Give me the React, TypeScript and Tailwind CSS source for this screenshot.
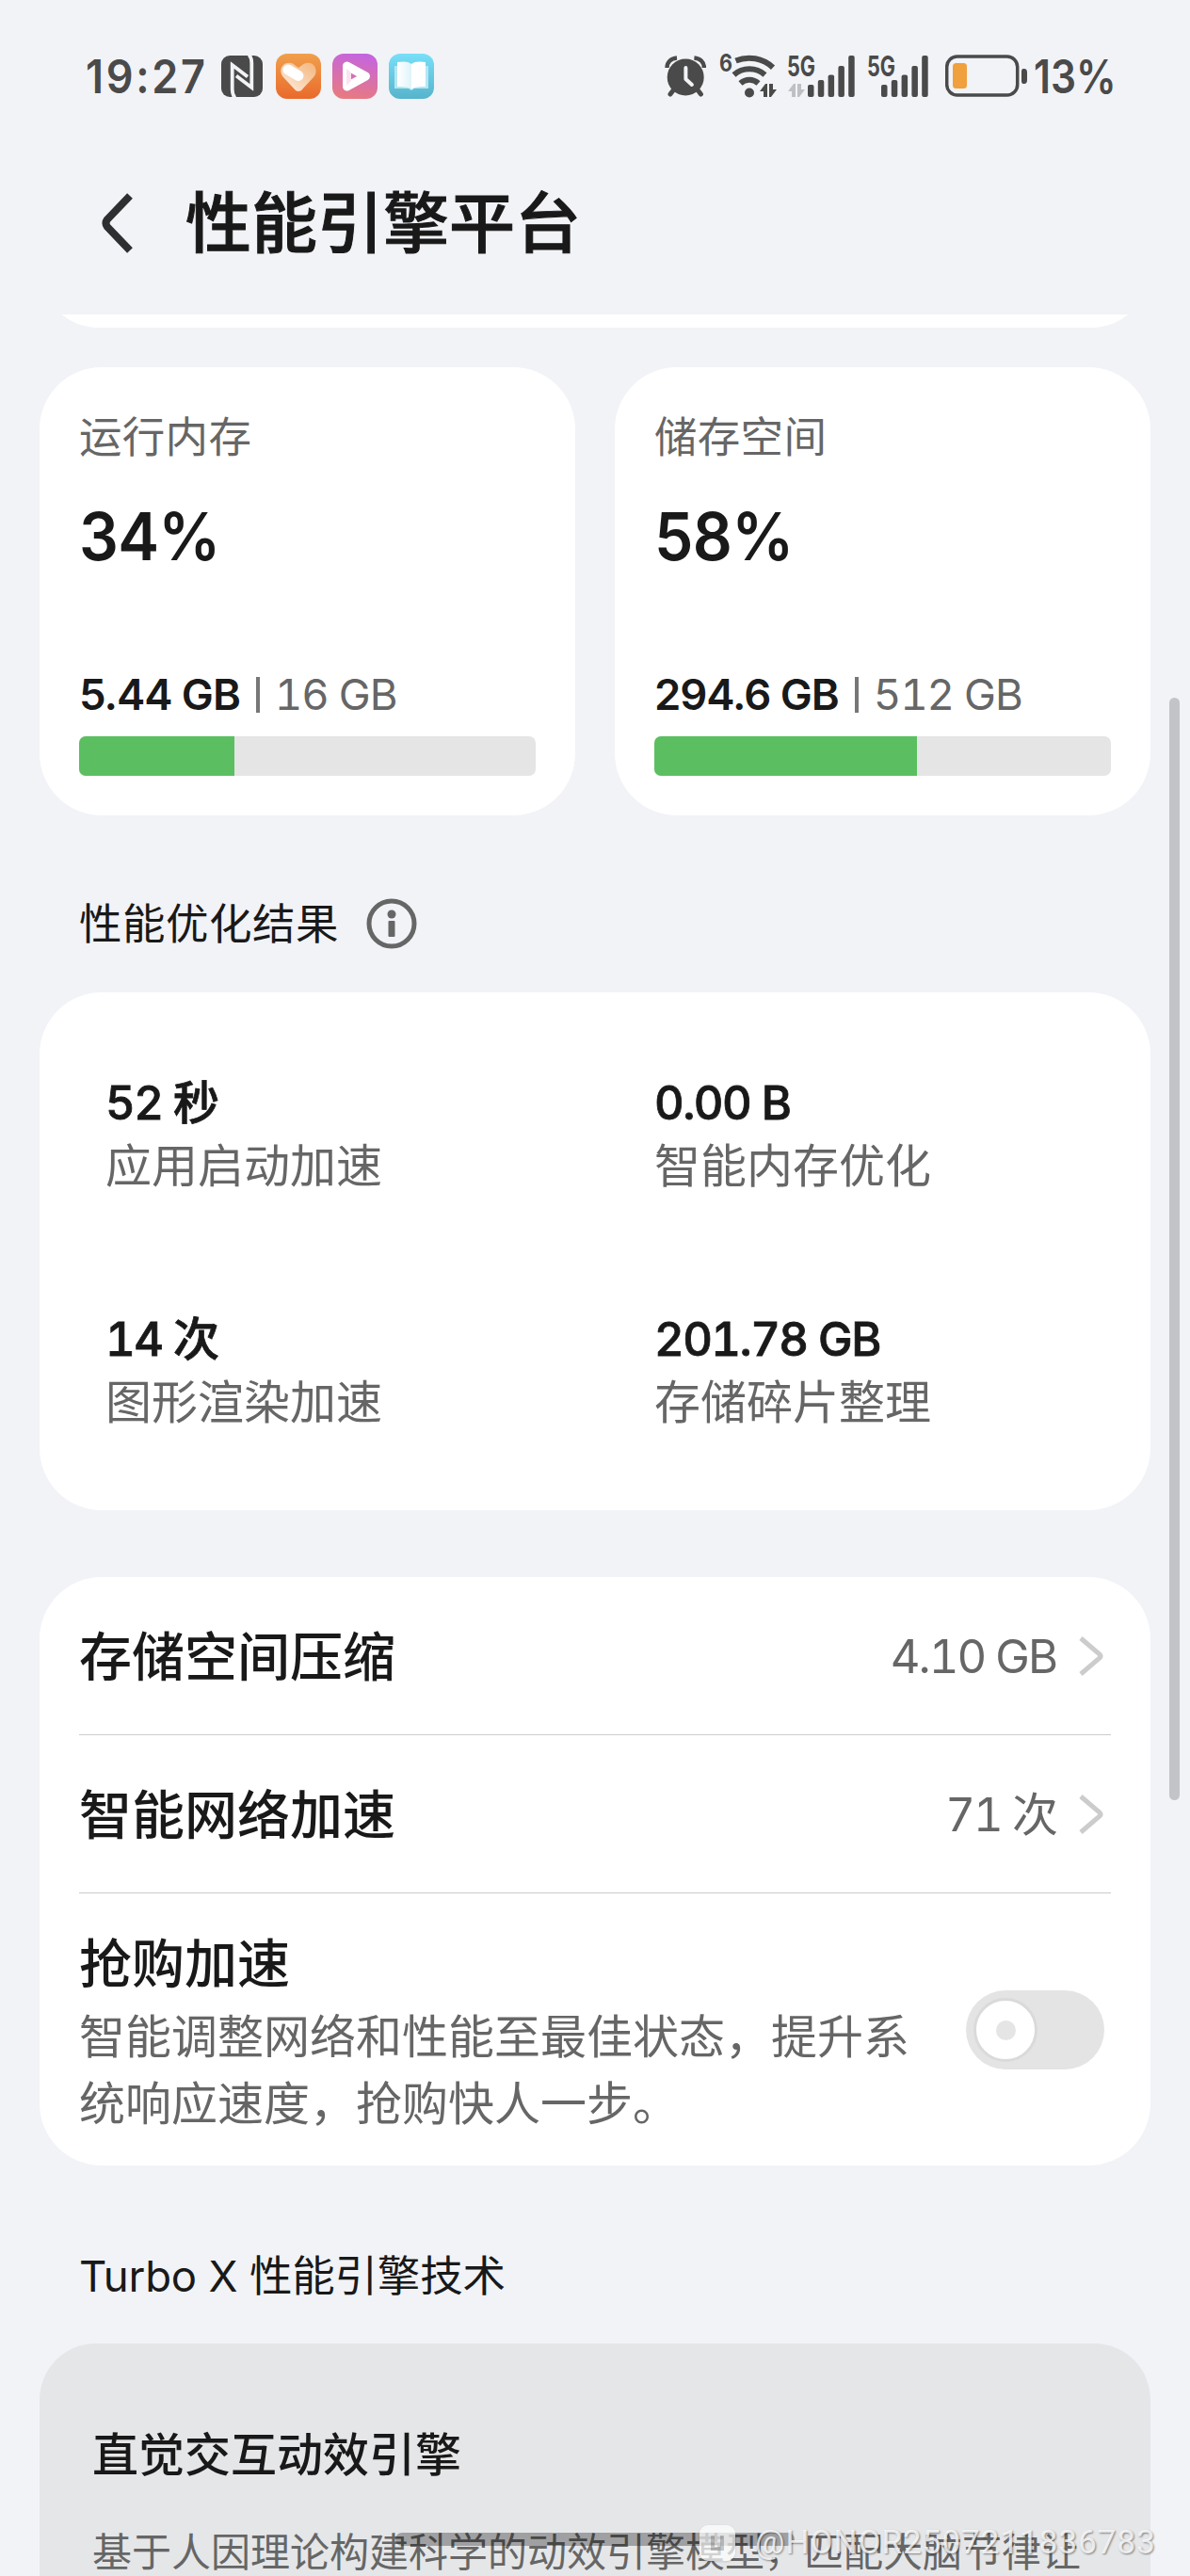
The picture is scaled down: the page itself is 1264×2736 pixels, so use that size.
const usageCards = [
  { label: '运行内存', percent: '34%', used: '5.44 GB', total: '16 GB', fill: 34 },
  { label: '储存空间', percent: '58%', used: '294.6 GB', total: '512 GB', fill: 57.5 },
]

const results = [
  { value: '52 秒', label: '应用启动加速' },
  { value: '0.00 B', label: '智能内存优化' },
  { value: '14 次', label: '图形渲染加速' },
  { value: '201.78 GB', label: '存储碎片整理' },
]

const links = [
  { title: '存储空间压缩', value: '4.10 GB' },
  { title: '智能网络加速', value: '71 次' },
]

const signalBars = [
  { x: 0, h: 13 },
  { x: 10.8, h: 18 },
  { x: 21.6, h: 23.5 },
  { x: 32.4, h: 33 },
  { x: 43.2, h: 44 },
]

function NfcIcon() {
  return (
    <svg width="44" height="44" viewBox="0 0 44 44" fill="none">
      <rect width="44" height="44" rx="9" fill="#4a4a4a" />
      <path d="M14.500 45C12 42 11.700 40 11.700 36V10L28 22.500" stroke="#f1f3f7" strokeWidth="3.800" />
      <path d="M29.500 -1C32 2 32.300 4 32.300 8V34L16 21.500" stroke="#f1f3f7" strokeWidth="3.800" />
    </svg>
  )
}

function HealthIcon() {
  return (
    <svg width="48" height="48" viewBox="0 0 48 48">
      <defs>
        <linearGradient id="health-bg" x1="0" y1="0" x2="0" y2="1">
          <stop stopColor="#f0a04c" />
          <stop offset="1" stopColor="#ea6a2c" />
        </linearGradient>
        <linearGradient id="health-heart" x1="1" y1="0" x2="0" y2="1">
          <stop stopColor="#f4b57c" />
          <stop offset="1" stopColor="#fdeee2" />
        </linearGradient>
      </defs>
      <rect width="48" height="48" rx="12" fill="url(#health-bg)" />
      <path d="M24 40c-2 0-3-1-4-2L8 25C4 20 5 15 8 12s9-3 12 0l4 3 4-3c4-3 9-3 12 0s4 9 0 13L28 38c-1 1-2 2-4 2z" fill="url(#health-heart)" />
      <path d="M13 17l11 6.500" stroke="#fff" strokeWidth="11" strokeLinecap="round" />
    </svg>
  )
}

function VideoIcon() {
  return (
    <svg width="48" height="48" viewBox="0 0 48 48">
      <defs>
        <linearGradient id="video-bg" x1="0.6" y1="0" x2="0.4" y2="1">
          <stop stopColor="#c565df" />
          <stop offset="1" stopColor="#e87a80" />
        </linearGradient>
      </defs>
      <rect width="48" height="48" rx="12" fill="url(#video-bg)" />
      <path d="M15.500 13v22L35.500 24z" fill="none" stroke="#fff" strokeWidth="9" strokeLinejoin="round" />
      <path d="M15 34V16l5 4v9z" fill="#fbe3f1" />
    </svg>
  )
}

function BookIcon() {
  return (
    <svg width="48" height="48" viewBox="0 0 48 48">
      <defs>
        <linearGradient id="book-bg" x1="0" y1="0" x2="0" y2="1">
          <stop stopColor="#78dff8" />
          <stop offset="1" stopColor="#56b4cc" />
        </linearGradient>
        <linearGradient id="book-page">
          <stop stopColor="#fff" />
          <stop offset="1" stopColor="#dff4fa" />
        </linearGradient>
      </defs>
      <rect width="48" height="48" rx="12" fill="url(#book-bg)" />
      <path d="M6 13h36v24H27l-3 2-3-2H6z" fill="#b5e6f2" />
      <path d="M9 9c6-1 12-1 15 2v27c-3-3-9-3-15-3z" fill="url(#book-page)" />
      <path d="M39 9c-6-1-12-1-15 2v27c3-3 9-3 15-3z" fill="#fff" />
    </svg>
  )
}

function AlarmIcon() {
  return (
    <svg width="44" height="48" viewBox="0 0 44 48" fill="none" stroke="#4a4a4a">
      <circle cx="22.200" cy="25" r="19.500" fill="#4a4a4a" stroke="none" />
      <path d="M2.500 15C2.500 9 7 5 13 4.500M41.900 15C41.900 9 37.400 5 31.400 4.500" strokeWidth="4.500" />
      <path d="M9 39l-3 4M35.400 39l3 4" strokeWidth="5" strokeLinecap="round" />
      <path d="M22.400 15v12l6.500 6" stroke="#f1f3f7" strokeWidth="4" strokeLinecap="round" strokeLinejoin="round" />
    </svg>
  )
}

function TrafficArrows({ x, color }: { x: number; color: string }) {
  return (
    <g transform={`translate(${x} 32)`} fill={color}>
      <path d="M0 8L6 0h2v14H4V8z" />
      <path d="M18 6L12 14h-2V0h4v6z" />
    </g>
  )
}

function WifiIcon() {
  return (
    <svg className="overflow-visible" width="62" height="48" viewBox="0 0 62 48" fill="none">
      <text x="1" y="19" fontSize="26" fontWeight="700" fill="#4a4a4a" textLength="14" lengthAdjust="spacingAndGlyphs">6</text>
      <g stroke="#4a4a4a" strokeWidth="6">
        <path d="M18.500 7.500A37 37 0 0 1 58 14.700" />
        <path d="M16.500 22.500A25 25 0 0 1 49.500 22.500" />
        <path d="M23.500 31.500A14 14 0 0 1 42.500 31.500" />
      </g>
      <circle cx="33" cy="41.500" r="5" fill="#4a4a4a" />
      <TrafficArrows x={44} color="#4a4a4a" />
    </svg>
  )
}

function SignalIcon({ traffic }: { traffic?: boolean }) {
  const start = traffic ? 22 : 15
  return (
    <svg className="overflow-visible" width={start + 50} height="48" viewBox={`0 0 ${start + 50} 48`}>
      <text x="0" y="24" fontSize="30" fontWeight="700" fill="#4a4a4a" textLength="30" lengthAdjust="spacingAndGlyphs">5G</text>
      {traffic && <TrafficArrows x={1} color="#bfc0c3" />}
      {signalBars.map(bar => (
        <rect key={bar.x} x={start + bar.x} y={46 - bar.h} width="6.500" height={bar.h} rx="2" fill="#4a4a4a" />
      ))}
    </svg>
  )
}

function BatteryIcon() {
  return (
    <svg width="88" height="48" viewBox="0 0 88 48">
      <rect x="1.700" y="3" width="75" height="41" rx="11" fill="none" stroke="#4a4a4a" strokeWidth="3.500" />
      <rect x="8" y="10" width="15" height="27" rx="3.500" fill="#f0a03c" />
      <path d="M83 16h1q3 0 3 4v8q0 4-3 4h-1q-2 0-2-3V19q0-3 2-3z" fill="#4a4a4a" />
    </svg>
  )
}

function StatusBar() {
  return (
    <div className="flex h-[162px] items-start pt-[57px] pl-[91px] text-[50px] leading-[49px] font-semibold text-[#4a4a4a]">
      <span className="w-[144px] origin-left scale-x-[0.9] tracking-[0.06em]">19:27</span>
      <div className="flex h-12 items-center gap-3">
        <div className="mr-0.5"><NfcIcon /></div>
        <HealthIcon />
        <VideoIcon />
        <BookIcon />
      </div>
      <div className="ml-[245px] flex h-12">
        <AlarmIcon />
        <div className="ml-[13px]"><WifiIcon /></div>
        <div className="ml-[11px]"><SignalIcon traffic /></div>
        <div className="ml-[13px]"><SignalIcon /></div>
        <div className="ml-[18px]"><BatteryIcon /></div>
        <span className="ml-1.5 origin-left scale-x-[0.85]">13%</span>
      </div>
    </div>
  )
}

function UsageCard({ card }: { card: (typeof usageCards)[number] }) {
  return (
    <div className="h-[476px] w-[569px] rounded-[66px] bg-white px-[42px] pt-[45px]">
      <div className="text-[45.5px] leading-[60px] tracking-[0.3px] text-[#666]">{card.label}</div>
      <div className="mt-[30px] w-[200px] origin-left scale-x-[0.94] text-[70px] leading-[90px] font-semibold tracking-[-0.01em]">{card.percent}</div>
      <div className="mt-[93px] flex items-center text-[45.5px] leading-[60px]">
        <span className="font-semibold tracking-[-0.023em]">{card.used}</span>
        <span className="mr-[16px] ml-[17px] h-[38px] w-[4px] bg-[#777]" />
        <span className="tracking-[-0.024em] text-[#666] tabular-nums">{card.total}</span>
      </div>
      <div className="mt-[14px] h-[42px] overflow-hidden rounded-[7px] bg-[#e5e5e5]">
        <div className="h-full bg-[#5bbf61]" style={{ width: `${card.fill}%` }} />
      </div>
    </div>
  )
}

function InfoIcon() {
  return (
    <svg width="54" height="54" viewBox="0 0 54 54" fill="#666">
      <circle cx="27" cy="27" r="24" fill="none" stroke="#666" strokeWidth="5" />
      <circle cx="27" cy="17" r="4.500" />
      <rect x="23.500" y="24" width="7" height="17" rx="1" />
    </svg>
  )
}

function Toggle() {
  return (
    <div className="flex h-[84px] w-[147px] items-center rounded-full bg-[#e4e4e4] pl-[8px]">
      <div className="flex size-[68px] items-center justify-center rounded-full border-3 border-[#dadada] bg-white">
        <div className="size-[21px] rounded-full bg-[#e5e5e5]" />
      </div>
    </div>
  )
}

export default function App() {
  return (
    <div
      lang="zh-CN"
      className="relative h-[2736px] w-[1264px] overflow-hidden bg-[#f1f3f7] font-['Inter','Noto_Sans_CJK_SC',sans-serif] whitespace-nowrap text-[#191919]"
    >
      <StatusBar />
      <header className="flex h-[172px] items-start pl-[106px]">
        <svg className="mt-[42px]" width="36" height="66" viewBox="0 0 36 66" fill="none">
          <path d="M32 4L8 29q-3 4 0 8l24 25" stroke="#2e2f30" strokeWidth="8" />
        </svg>
        <h1 className="ml-[55px] text-[70px] leading-[151px] font-medium [-webkit-text-stroke:1px_#191919]">性能引擎平台</h1>
      </header>

      <main className="px-[42px]">
        <div className="flex h-[14px] items-end overflow-hidden">
          <div className="h-[150px] w-full shrink-0 rounded-[63px] bg-white" />
        </div>

        <div className="mt-[42px] flex justify-between">
          {usageCards.map(card => <UsageCard key={card.label} card={card} />)}
        </div>

        <div className="mt-[85px] flex h-[60px] items-center pl-[42px]">
          <h2 className="w-[305px] pt-0.5 text-[45.5px] leading-[60px] tracking-[0.5px]">性能优化结果</h2>
          <InfoIcon />
        </div>

        <section className="mt-[43px] grid h-[550px] grid-cols-[583px_1fr] grid-rows-[251px_1fr] rounded-[66px] bg-white pt-[84px] pl-[70px]">
          {results.map(item => (
            <div key={item.label} className="text-[49px]">
              <div className="leading-[67px] font-medium tracking-[-0.032em] tabular-nums [-webkit-text-stroke:0.8px_#191919]">{item.value}</div>
              <div className="leading-[67px] text-[#666]">{item.label}</div>
            </div>
          ))}
        </section>

        <section className="mt-[71px] h-[625px] rounded-[66px] bg-white px-[42px]">
          {links.map(link => (
            <div key={link.title} className="flex h-[168px] items-center border-b border-[#cbcbcb] text-[49px]">
              <span className="pt-[3px] text-[56px] font-medium">{link.title}</span>
              <span className="ml-auto pt-0.5 tracking-[-2px] text-[#666] tabular-nums">{link.value}</span>
              <svg className="mr-[7px] ml-[23px]" width="28" height="44" viewBox="0 0 28 44" fill="none">
                <path d="M3 3l20 17q2 2 0 4L3 41" stroke="#cccccc" strokeWidth="5" />
              </svg>
            </div>
          ))}
          <div className="flex justify-between pt-[38px]">
            <div>
              <div className="text-[56px] leading-[74px] font-medium">抢购加速</div>
              <p className="mt-[5px] w-[900px] text-[49px] leading-[71px] text-[#666]">
                智能调整网络和性能至最佳状态，提升系<br />统响应速度，抢购快人一步。
              </p>
            </div>
            <div className="mt-[65px] mr-[7px]"><Toggle /></div>
          </div>
        </section>

        <h2 className="mt-[88px] pl-[42px] text-[45.5px] leading-[60px] tracking-[-0.2px]">Turbo X 性能引擎技术</h2>
        <section className="mt-[41px] h-[400px] rounded-[60px] bg-[#e5e6e8] px-[56px] pt-[84px]">
          <h3 className="text-[49px] leading-[70px] font-medium">直觉交互动效引擎</h3>
          <p className="mt-[39px] text-[42px] leading-[58px] text-[#666]">基于人因理论构建科学的动效引擎模型，匹配大脑节律让</p>
        </section>
      </main>

      <div className="absolute top-[741px] left-[1242px] h-[1171px] w-[11px] rounded-full bg-[#c3c4c8]" />
      <div className="absolute top-[2690px] left-[420px] h-[14px] w-[424px] rounded-full bg-black/30" />
      <div className="absolute top-[2681px] left-[743px] flex h-[40px] items-center">
        <div className="flex size-[38px] items-center justify-center rounded-[9px] bg-white/70 shadow">
          <div className="h-[16px] w-[14px] border-x-4 border-b-4 border-black/20" />
        </div>
        <span className="ml-[21px] font-['Roboto',sans-serif] text-[35px] tracking-[1px] text-white/80 [text-shadow:1px_1px_2px_rgba(0,0,0,0.45)]">@HONOR2507211836783</span>
      </div>
    </div>
  )
}
